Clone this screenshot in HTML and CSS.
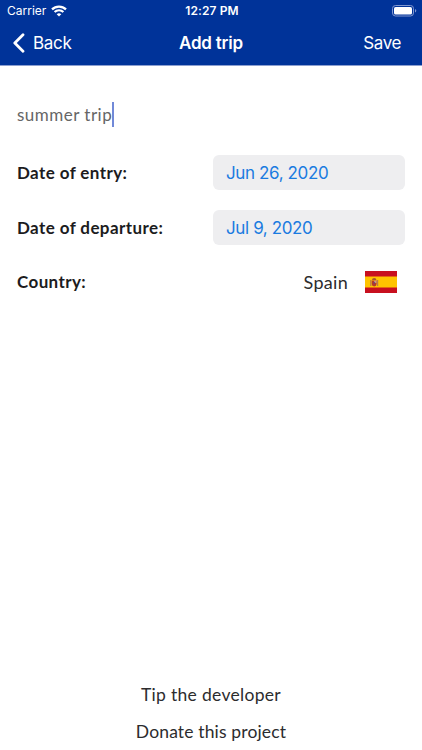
FILE: index.html
```html
<!DOCTYPE html>
<html lang="en">
<head>
    <meta charset="utf-8">
    <title>Add trip</title>
    <link rel="stylesheet" href="styles.css">
</head>
<body>
    <header>
        <div class="status">
            <div class="carrier">
                <span>Carrier</span>
                <svg width="16" height="12" viewBox="0 0 16 12" fill="none" stroke="#fff" stroke-width="2.2">
                    <path d="M1 4.4a10 10 0 0 1 14 0"/>
                    <path d="M3.6 7.1a6.2 6.2 0 0 1 8.8 0"/>
                    <path d="M8 11.6L5.7 9.3a3.3 3.3 0 0 1 4.6 0z" fill="#fff" stroke="none"/>
                </svg>
            </div>
            <div class="clock">12:27 PM</div>
            <div class="battery">
                <svg width="25" height="12" viewBox="0 0 25 12">
                    <rect x="0.5" y="0.5" width="21" height="10.5" rx="3" fill="none" stroke="#8097d0"/>
                    <rect x="2" y="2" width="18" height="7.5" rx="1.6" fill="#fff"/>
                    <path d="M23 4v3.5q1.3-.5 1.3-1.75T23 4z" fill="#8097d0"/>
                </svg>
            </div>
        </div>
        <nav>
            <a class="back">
                <svg width="13" height="20" viewBox="0 0 13 20" fill="none" stroke="#fff" stroke-width="2.8" stroke-linecap="round" stroke-linejoin="round">
                    <path d="M11 1.7L2.8 10l8.2 8.3"/>
                </svg>
                <span>Back</span>
            </a>
            <h1>Add trip</h1>
            <a class="save">Save</a>
        </nav>
    </header>

    <main>
        <div class="trip-name"><span>summer trip</span><i class="caret"></i></div>
        <div class="row">
            <label>Date of entry:</label>
            <div class="date">Jun 26, 2020</div>
        </div>
        <div class="row">
            <label>Date of departure:</label>
            <div class="date">Jul 9, 2020</div>
        </div>
        <div class="row country">
            <label>Country:</label>
            <div class="value">
                <span>Spain</span>
                <svg width="32" height="22" viewBox="0 0 32 22">
                    <rect width="32" height="22" fill="#c8101f"/>
                    <rect y="5.5" width="32" height="11" fill="#ffc400"/>
                    <path d="M5.2 9h1.2v6H5.2zM12 9h1.2v6H12z" fill="#b9794c"/>
                    <path d="M6.8 9.5h4.8v3.6a2.4 2.4 0 0 1-4.8 0z" fill="#b5382b"/>
                    <path d="M7 9q0-2 2.2-2t2.2 2z" fill="#a8552c"/>
                    <path d="M9.2 9.6h2.2v2.3H9.2z" fill="#c99a95"/>
                    <circle cx="9.2" cy="11.9" r="0.8" fill="#5d4b78"/>
                </svg>
            </div>
        </div>
    </main>

    <footer>
        <a class="tip">Tip the developer</a>
        <a class="donate">Donate this project</a>
    </footer>
</body>
</html>
```

FILE: styles.css
```css
* {
    box-sizing: border-box;
}
body {
    margin: 0;
    height: 750px;
    display: flex;
    flex-direction: column;
    background-color: #fff;
    color: #1c1c1e;
    font-family: Lato, sans-serif;
    font-size: 17px;
}
header {
    height: 66px;
    background-color: #003399;
    border-bottom: 1px solid #8c9fd0;
    color: #fff;
    font-family: Inter, sans-serif;
}
.status {
    display: grid;
    grid-template-columns: 1fr auto 1fr;
    align-items: center;
    height: 21px;
    padding: 0 5px 0 7px;
    font-size: 12px;
}
.carrier {
    display: flex;
    align-items: center;
    gap: 5px;
}
.clock {
    font-size: 12px;
    font-weight: 600;
    letter-spacing: 0.1px;
}
.battery {
    display: flex;
    justify-content: flex-end;
}
nav {
    display: grid;
    grid-template-columns: 1fr auto 1fr;
    align-items: center;
    height: 44px;
    padding: 0 12px;
}
.back {
    display: flex;
    align-items: center;
    gap: 8px;
    letter-spacing: -0.3px;
}
h1 {
    margin: 0;
    font-size: 17px;
    font-weight: 600;
    letter-spacing: -0.2px;
}
.save {
    padding-right: 9px;
    text-align: right;
    letter-spacing: -0.4px;
}
main {
    flex: 1;
    padding: 33px 17px 0;
}
.trip-name {
    display: flex;
    align-items: center;
    height: 30px;
    margin-bottom: 26px;
    color: #666;
    letter-spacing: 0.48px;
}
.caret {
    width: 2px;
    height: 25px;
    background-color: #7189d8;
}
.row {
    display: flex;
    align-items: center;
    justify-content: space-between;
    height: 35px;
    margin-bottom: 20px;
}
.country {
    height: 33px;
}
label {
    font-weight: 700;
    letter-spacing: 0.4px;
}
.date {
    display: flex;
    align-items: center;
    width: 192px;
    height: 35px;
    padding-left: 13px;
    border-radius: 6px;
    background-color: #eeeef0;
    color: #1a7be0;
    font-family: Inter, sans-serif;
    letter-spacing: -0.38px;
}
.value {
    display: flex;
    align-items: center;
    gap: 17px;
    padding-right: 8px;
    color: #2c2c2e;
    font-size: 18px;
    letter-spacing: 0.3px;
}
footer {
    display: flex;
    flex-direction: column;
    align-items: center;
    line-height: 37px;
    color: #2c2c2e;
    font-size: 17.5px;
}
.tip {
    letter-spacing: 0.3px;
}
.donate {
    letter-spacing: 0.15px;
}
```
